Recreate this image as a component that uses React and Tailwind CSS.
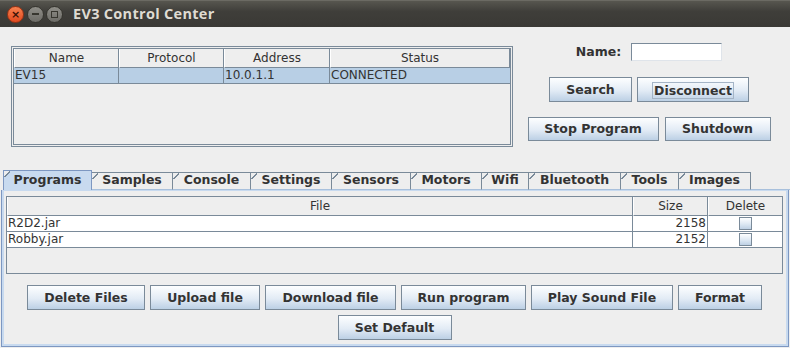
import React from 'react';

const TABS = [
  ['Programs', 89], ['Samples', 81], ['Console', 78], ['Settings', 81], ['Sensors', 79],
  ['Motors', 71], ['Wifi', 47], ['Bluetooth', 92], ['Tools', 58], ['Images', 72],
];

const FILES = [
  { name: 'R2D2.jar', size: 2158 },
  { name: 'Robby.jar', size: 2152 },
];

const ACTIONS = [
  ['Delete Files', 118], ['Upload file', 110], ['Download file', 131],
  ['Run program', 125], ['Play Sound File', 142], ['Format', 84],
];

function Btn({ children, w, h = 25, focus }) {
  return (
    <div
      className="flex items-center justify-center pt-[1px] border border-[#7a8a99] bg-[linear-gradient(to_bottom,#fdfeff,#e2ebf5_55%,#bcd0e5)] font-bold text-[12.5px] text-[#333]"
      style={{ width: w, height: h }}
    >
      {focus ? <span className="border border-[#a4b4c6] px-[1px] leading-[15px]">{children}</span> : children}
    </div>
  );
}

function TitleBar() {
  return (
    <div className="h-[27px] shrink-0 flex items-center bg-[linear-gradient(to_bottom,#57564f,#3f3e3a_40%,#3a3935)] border-t border-[#6b6a63]">
      <div className="ml-[7px] w-[17px] h-[17px] rounded-full bg-[linear-gradient(to_bottom,#f7814f,#e0491f)] border border-[#9c3214] flex items-center justify-center text-[#3b1207] text-[11px] leading-none font-bold">×</div>
      <div className="ml-[3px] w-[17px] h-[17px] rounded-full bg-[linear-gradient(to_bottom,#8f8e88,#6c6b66)] border border-[#36352f] flex items-center justify-center">
        <div className="w-[7px] h-[2px] bg-[#37362f]" />
      </div>
      <div className="ml-[2px] w-[17px] h-[17px] rounded-full bg-[linear-gradient(to_bottom,#8f8e88,#6c6b66)] border border-[#36352f] flex items-center justify-center">
        <div className="w-[7px] h-[7px] border border-[#37362f]" />
      </div>
      <div className="ml-[10px] text-[#dfdbd2] font-bold text-[14.5px] font-['Open_Sans','Noto_Sans',sans-serif] tracking-[0.3px]">EV3 Control Center</div>
    </div>
  );
}

function HeaderCell({ children, className = '' }) {
  return (
    <div className={`h-full flex items-center justify-center border-r border-b border-[#7a8a99] border-l border-l-white ${className}`}>
      {children}
    </div>
  );
}

export default function App() {
  return (
    <div className="w-[790px] h-[348px] overflow-hidden bg-[#eeeeee] flex flex-col font-['DejaVu_Sans',sans-serif] text-[12px] text-[#333]">
      <TitleBar />

      {/* top: device table + controls */}
      <div className="h-[143px] shrink-0 flex">
        <div className="pl-[11px] pt-[19px]">
          <div className="w-[502px] h-[101px] border-[3px] border-double border-[#7a8a99] bg-[#eeeeee] flex flex-col">
            <div className="h-[19px] flex">
              <HeaderCell className="w-[105px]">Name</HeaderCell>
              <HeaderCell className="w-[105px]">Protocol</HeaderCell>
              <HeaderCell className="w-[106px]">Address</HeaderCell>
              <HeaderCell className="flex-1">Status</HeaderCell>
            </div>
            <div className="h-[16px] flex bg-[#b8cfe5] border-b border-[#7a8a99]">
              <div className="w-[105px] pl-[1px] border-r border-[#7a8a99] leading-[15px]">EV15</div>
              <div className="w-[105px] border-r border-[#7a8a99]" />
              <div className="w-[106px] pl-[1px] border-r border-[#7a8a99] leading-[15px]">10.0.1.1</div>
              <div className="flex-1 pl-[1px] leading-[15px]">CONNECTED</div>
            </div>
          </div>
        </div>

        <div className="w-[272px] flex flex-col items-center pt-[16px]">
          <div className="flex items-center h-[18px]">
            <span className="font-bold text-[12.5px] mr-[10px]">Name:</span>
            <div className="w-[91px] h-[18px] bg-white border border-[#7a8a99] border-r-[#dfe4ea] border-b-[#dfe4ea]" />
          </div>
          <div className="flex gap-[5px] mt-[16px]">
            <Btn w={83}>Search</Btn>
            <Btn w={112} focus>Disconnect</Btn>
          </div>
          <div className="flex gap-[6px] mt-[15px]">
            <Btn w={131} h={24}>Stop Program</Btn>
            <Btn w={106} h={24}>Shutdown</Btn>
          </div>
        </div>
      </div>

      {/* tabs */}
      <div className="h-[20px] shrink-0 flex items-end pl-[3px]">
        {TABS.map(([t, w], i) => {
          const sel = i === 0;
          return (
            <div
              key={t}
              className={`relative flex items-center justify-center font-bold text-[12.5px] border-t border-r border-l ${
                sel
                  ? 'h-[20px] bg-[#c8daef] border-[#7d97c1] border-b-0 z-10'
                  : 'h-[18px] bg-[#eeeeee] border-[#7a8a99] border-l-0 border-b border-b-[#a8c0dc]'
              }`}
              style={{ width: w }}
            >
              <span className="absolute left-0 top-0 w-[6px] h-[6px] bg-[linear-gradient(135deg,#eeeeee_48%,#7a8a99_48%,#7a8a99_62%,transparent_62%)]" />
              <span className={sel ? '' : '-mt-[2px]'}>{t}</span>
            </div>
          );
        })}
        <div className="flex-1 h-[1px] bg-[#a8c0dc]" />
      </div>

      {/* tab panel */}
      <div className="flex-1 ml-[1px] mr-[1px] mb-[1px] border border-t-0 border-[#7d97c1]">
        <div className="h-full border-2 border-t border-[#c8daef] border-t-[#c8daef] pl-[2px] pr-[3px] pt-[5px] flex flex-col">
          <div className="h-[78px] shrink-0 border border-[#7a8a99] flex flex-col">
            <div className="h-[19px] flex shrink-0">
              <HeaderCell className="flex-1">File</HeaderCell>
              <HeaderCell className="w-[75px]">Size</HeaderCell>
              <HeaderCell className="w-[74px] border-r-0">Delete</HeaderCell>
            </div>
            {FILES.map(f => (
              <div key={f.name} className="h-[16px] flex bg-white border-b border-[#7a8a99]">
                <div className="flex-1 pl-[1px] border-r border-[#7a8a99] leading-[15px]">{f.name}</div>
                <div className="w-[75px] pr-[1px] text-right border-r border-[#7a8a99] leading-[15px]">{f.size}</div>
                <div className="w-[74px] flex items-center justify-center">
                  <div className="w-[13px] h-[13px] border border-[#7a8a99] bg-[linear-gradient(to_bottom,#fdfeff,#dde8f3_55%,#bdd0e4)]" />
                </div>
              </div>
            ))}
          </div>

          <div className="flex justify-center gap-[5px] mt-[11px]">
            {ACTIONS.map(([t, w]) => <Btn key={t} w={w}>{t}</Btn>)}
          </div>
          <div className="flex justify-center mt-[5px]">
            <Btn w={114}>Set Default</Btn>
          </div>
        </div>
      </div>
    </div>
  );
}
